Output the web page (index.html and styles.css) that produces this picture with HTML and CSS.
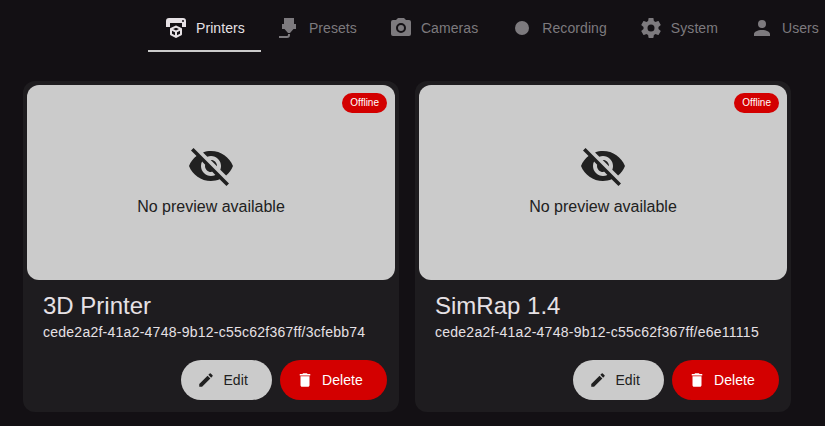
FILE: index.html
```html
<!DOCTYPE html>
<html lang="en">
<head>
<meta charset="utf-8">
<title>Printers</title>
<link rel="stylesheet" href="styles.css">
</head>
<body>
<svg class="sprite" aria-hidden="true">
  <symbol id="visibility-off" viewBox="0 0 24 24"><path d="M12 7c2.76 0 5 2.24 5 5 0 .65-.13 1.26-.36 1.83l2.92 2.92c1.51-1.26 2.7-2.89 3.43-4.75-1.73-4.39-6-7.5-11-7.5-1.4 0-2.74.25-3.98.7l2.16 2.16C10.74 7.13 11.35 7 12 7zM2 4.27l2.28 2.28.46.46C3.08 8.3 1.78 10.02 1 12c1.73 4.39 6 7.5 11 7.5 1.55 0 3.03-.3 4.38-.84l.42.42L19.73 22 21 20.73 3.27 3 2 4.27zM7.53 9.8l1.55 1.55c-.05.21-.08.43-.08.65 0 1.66 1.34 3 3 3 .22 0 .44-.03.65-.08l1.55 1.55c-.67.33-1.41.53-2.2.53-2.76 0-5-2.24-5-5 0-.79.2-1.53.53-2.2zm4.31-.78l3.15 3.15.02-.16c0-1.66-1.34-3-3-3l-.17.01z"/></symbol>
  <symbol id="pencil" viewBox="0 0 24 24"><path d="M3 17.25V21h3.75L17.81 9.94l-3.75-3.75L3 17.25zM20.71 7.04a1 1 0 0 0 0-1.41l-2.34-2.34a1 1 0 0 0-1.41 0l-1.83 1.83 3.75 3.75 1.83-1.83z"/></symbol>
  <symbol id="trash" viewBox="0 0 24 24"><path d="M6 19c0 1.1.9 2 2 2h8c1.1 0 2-.9 2-2V7H6v12zM19 4h-3.5l-1-1h-5l-1 1H5v2h14V4z"/></symbol>
</svg>
<nav class="tabs">
  <a class="tab active"><svg viewBox="0 0 24 24"><path d="M19,6A1,1 0 0,0 20,5A1,1 0 0,0 19,4A1,1 0 0,0 18,5A1,1 0 0,0 19,6M19,2A3,3 0 0,1 22,5V11H18V7H6V11H2V5A3,3 0 0,1 5,2H19M18,18.25C18,18.63 17.79,18.96 17.47,19.13L12.57,21.82C12.4,21.94 12.21,22 12,22C11.79,22 11.59,21.94 11.43,21.82L6.53,19.13C6.21,18.96 6,18.63 6,18.25V13C6,12.62 6.21,12.29 6.53,12.12L11.43,9.68C11.59,9.56 11.79,9.5 12,9.5C12.21,9.5 12.41,9.56 12.57,9.68L17.47,12.12C17.79,12.29 18,12.62 18,13V18.25M12,11.65L9.04,13L12,14.6L14.96,13L12,11.65M8,17.66L11,19.29V16.33L8,14.71V17.66M16,17.66V14.71L13,16.33V19.29L16,17.66Z"/></svg>Printers</a>
  <a class="tab"><svg viewBox="0 0 24 24"><path d="M7,2H17V8H19V13H16.5L13,17H11L7.5,13H5V8H7V2M10,22H2V20H10A1,1 0 0,0 11,19V18H13V19A3,3 0 0,1 10,22Z"/></svg>Presets</a>
  <a class="tab"><svg viewBox="0 0 24 24"><path d="M4,4H7L9,2H15L17,4H20A2,2 0 0,1 22,6V18A2,2 0 0,1 20,20H4A2,2 0 0,1 2,18V6A2,2 0 0,1 4,4M12,7A5,5 0 0,0 7,12A5,5 0 0,0 12,17A5,5 0 0,0 17,12A5,5 0 0,0 12,7M12,9A3,3 0 0,1 15,12A3,3 0 0,1 12,15A3,3 0 0,1 9,12A3,3 0 0,1 12,9Z"/></svg>Cameras</a>
  <a class="tab"><svg viewBox="0 0 24 24"><circle cx="12" cy="12" r="7"/></svg>Recording</a>
  <a class="tab"><svg viewBox="0 0 24 24"><path d="M12,15.5A3.5,3.5 0 0,1 8.5,12A3.5,3.5 0 0,1 12,8.5A3.5,3.5 0 0,1 15.5,12A3.5,3.5 0 0,1 12,15.5M19.43,12.97C19.47,12.65 19.5,12.33 19.5,12C19.5,11.67 19.47,11.34 19.43,11L21.54,9.37C21.73,9.22 21.78,8.95 21.66,8.73L19.66,5.27C19.54,5.05 19.27,4.96 19.05,5.05L16.56,6.05C16.04,5.66 15.5,5.32 14.87,5.07L14.5,2.42C14.46,2.18 14.25,2 14,2H10C9.75,2 9.54,2.18 9.5,2.42L9.13,5.07C8.5,5.32 7.96,5.66 7.44,6.05L4.95,5.05C4.73,4.96 4.46,5.05 4.34,5.27L2.34,8.73C2.21,8.95 2.27,9.22 2.46,9.37L4.57,11C4.53,11.34 4.5,11.67 4.5,12C4.5,12.33 4.53,12.65 4.57,12.97L2.46,14.63C2.27,14.78 2.21,15.05 2.34,15.27L4.34,18.73C4.46,18.95 4.73,19.03 4.95,18.95L7.44,17.94C7.96,18.34 8.5,18.68 9.13,18.93L9.5,21.58C9.54,21.82 9.75,22 10,22H14C14.25,22 14.46,21.82 14.5,21.58L14.87,18.93C15.5,18.67 16.04,18.34 16.56,17.94L19.05,18.95C19.27,19.03 19.54,18.95 19.66,18.73L21.66,15.27C21.78,15.05 21.73,14.78 21.54,14.63L19.43,12.97Z"/></svg>System</a>
  <a class="tab"><svg viewBox="0 0 24 24"><path d="M12,4A4,4 0 0,1 16,8A4,4 0 0,1 12,12A4,4 0 0,1 8,8A4,4 0 0,1 12,4M12,14C16.42,14 20,15.79 20,18V20H4V18C4,15.79 7.58,14 12,14Z"/></svg>Users</a>
</nav>
<main class="cards">
  <article class="card">
    <div class="preview"><span class="badge">Offline</span><svg><use href="#visibility-off"/></svg><p>No preview available</p></div>
    <h2>3D Printer</h2>
    <p class="id">cede2a2f-41a2-4748-9b12-c55c62f367ff/3cfebb74</p>
    <div class="actions"><button class="btn"><svg><use href="#pencil"/></svg>Edit</button><button class="btn danger"><svg><use href="#trash"/></svg>Delete</button></div>
  </article>
  <article class="card">
    <div class="preview"><span class="badge">Offline</span><svg><use href="#visibility-off"/></svg><p>No preview available</p></div>
    <h2>SimRap 1.4</h2>
    <p class="id">cede2a2f-41a2-4748-9b12-c55c62f367ff/e6e11115</p>
    <div class="actions"><button class="btn"><svg><use href="#pencil"/></svg>Edit</button><button class="btn danger"><svg><use href="#trash"/></svg>Delete</button></div>
  </article>
</main>
</body>
</html>
```
FILE: styles.css
```css
* { box-sizing: border-box; }
body {
  margin: 0;
  height: 426px;
  overflow: hidden;
  background: #131014;
  color: #e6e1e5;
  font-family: "Liberation Sans", Arial, sans-serif;
}
h2, p { margin: 0; font-weight: 400; }
svg { fill: currentColor; flex: none; }
.sprite { display: none; }
.tabs {
  display: flex;
  height: 52px;
  margin-left: 148px;
}
.tab {
  display: flex;
  align-items: center;
  gap: 8px;
  padding: 6px 16px 0;
  border-bottom: 2px solid transparent;
  font-size: 14px;
  letter-spacing: 0.08px;
  white-space: nowrap;
  color: #7d7a7e;
}
.tab svg { width: 24px; height: 24px; }
.tab.active { color: #e6e1e5; border-color: #cbcbcb; }
.cards {
  display: flex;
  gap: 16px;
  padding: 29px 23px 0;
}
.card {
  flex: none;
  width: 376px;
  height: 331px;
  padding: 4px;
  border-radius: 12px;
  background: #1e1c1f;
}
.preview {
  position: relative;
  display: flex;
  flex-direction: column;
  align-items: center;
  height: 195px;
  padding-top: 57px;
  border-radius: 12px;
  background: #cbcbcb;
  color: #212121;
  font-size: 16px;
  line-height: 24px;
}
.preview svg { width: 48px; height: 48px; margin-bottom: 5px; }
.badge {
  position: absolute;
  top: 8px;
  right: 8px;
  height: 20px;
  padding: 0 8px;
  border-radius: 10px;
  background: #d30000;
  color: #fff;
  font-size: 10px;
  line-height: 20px;
}
.card h2 {
  margin: 10px 16px 0;
  font-size: 24px;
  line-height: 32px;
}
.id {
  margin: 0 16px;
  font-size: 14px;
  line-height: 20px;
  letter-spacing: 0.25px;
}
.actions {
  display: flex;
  justify-content: flex-end;
  gap: 8px;
  padding: 18px 8px 0;
}
.btn {
  display: flex;
  align-items: center;
  gap: 8px;
  height: 40px;
  padding: 0 24px 0 16px;
  border: 0;
  border-radius: 20px;
  background: #cbcbcb;
  color: #212121;
  font: 14px "Liberation Sans", Arial, sans-serif;
  letter-spacing: 0.1px;
}
.btn svg { width: 18px; height: 18px; }
.btn.danger { background: #d30000; color: #fff; }
```
